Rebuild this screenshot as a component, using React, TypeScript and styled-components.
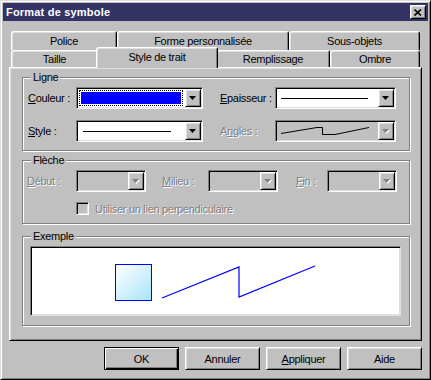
import React from 'react';
import styled, { createGlobalStyle, css } from 'styled-components';

const FACE = '#c0c0c0';
const SHADOW = '#808080';
const LIGHT = '#dfdfdf';

const GlobalStyle = createGlobalStyle`
  html, body {
    margin: 0;
    padding: 0;
    background: ${FACE};
  }
  body {
    font-family: 'Liberation Sans', Arial, sans-serif;
    font-size: 11px;
    letter-spacing: -0.3px;
    color: #000;
  }
`;

const raised = css`
  border: 1px solid;
  border-color: #fff #000 #000 #fff;
  box-shadow: inset 1px 1px ${LIGHT}, inset -1px -1px ${SHADOW};
  background: ${FACE};
`;

const sunken = css`
  border: 1px solid;
  border-color: ${SHADOW} #fff #fff ${SHADOW};
  box-shadow: inset 1px 1px #000, inset -1px -1px ${LIGHT};
  padding: 1px;
`;

const Window = styled.div`
  box-sizing: border-box;
  width: 431px;
  height: 380px;
  border: 1px solid;
  border-color: ${LIGHT} #000 #000 ${LIGHT};
  box-shadow: inset 1px 1px #fff, inset -1px -1px ${SHADOW};
  padding: 2px;
  background: ${FACE};
  display: flex;
  flex-direction: column;
`;

const TitleBar = styled.div`
  height: 18px;
  flex: none;
  background: #333366;
  display: flex;
  align-items: center;
  justify-content: space-between;
  padding: 0 2px 0 3px;
`;

const Title = styled.span`
  color: #fff;
  font-weight: bold;
  letter-spacing: 0.2px;
`;

const CloseButton = styled.button`
  ${raised};
  box-sizing: border-box;
  width: 16px;
  height: 14px;
  padding: 0;
  display: flex;
  align-items: center;
  justify-content: center;
`;

const Body = styled.div`
  padding: 10px 6px 0;
  display: flex;
  flex-direction: column;
`;

const TabStrip = styled.div`
  padding: 0 2px;
  display: flex;
  flex-direction: column;
`;

const TabRow = styled.div<{ $h: number }>`
  height: ${p => p.$h}px;
  display: flex;
`;

const Tab = styled.div<{ $w: number; $active?: boolean }>`
  box-sizing: border-box;
  flex: none;
  width: ${p => p.$w}px;
  display: flex;
  align-items: center;
  justify-content: center;
  border: 1px solid;
  border-bottom: none;
  border-color: #fff #000 transparent #fff;
  border-radius: 3px 3px 0 0;
  box-shadow: inset 1px 1px ${LIGHT}, inset -1px 0 ${SHADOW};
  background: ${FACE};
  white-space: nowrap;

  ${p =>
    p.$active &&
    css`
      position: relative;
      z-index: 1;
      align-self: flex-start;
      width: ${p.$w + 4}px;
      height: 21px;
      margin: -3px -2px 0;
      padding-bottom: 3px;
    `}
`;

const Panel = styled.div`
  box-sizing: border-box;
  height: 274px;
  border: 1px solid;
  border-color: #fff #000 #000 #fff;
  box-shadow: inset 1px 1px ${LIGHT}, inset -1px -1px ${SHADOW};
  padding: 3px 11px 0 12px;
  display: flex;
  flex-direction: column;
`;

const Group = styled.fieldset<{ $mt?: number }>`
  margin: ${p => p.$mt || 0}px 0 0;
  min-width: 0;
  padding: 0;
  border: 1px solid ${SHADOW};
  box-shadow: inset 1px 1px #fff, 1px 1px #fff;
`;

const Legend = styled.legend`
  padding: 0 2px;
  margin-left: 8px;
  line-height: 13px;
  background: ${FACE};
`;

const LineGrid = styled.div`
  display: grid;
  grid-template-columns: 48px 127px 17px 55px 121px;
  grid-template-rows: 22px 22px;
  row-gap: 11px;
  align-items: center;
  padding: 3px 0 8px 5px;
`;

const FieldRow = styled.div`
  display: flex;
  align-items: center;
  padding: 3px 0 0 4px;
`;

const Label = styled.span<{ $w?: number; $ml?: number; $disabled?: boolean; $col?: number }>`
  ${p => p.$w && `width: ${p.$w}px; flex: none;`}
  ${p => p.$ml && `margin-left: ${p.$ml}px;`}
  ${p => p.$col && `grid-column: ${p.$col};`}
  white-space: nowrap;
  ${p =>
    p.$disabled &&
    css`
      color: ${SHADOW};
      text-shadow: 1px 1px #fff;
    `}
`;

const Combo = styled.div<{ $w?: number; $disabled?: boolean; $col?: number }>`
  ${sunken};
  box-sizing: border-box;
  ${p => p.$w && `width: ${p.$w}px; flex: none;`}
  ${p => p.$col && `grid-column: ${p.$col};`}
  height: 22px;
  display: flex;
  background: ${p => (p.$disabled ? FACE : '#fff')};
`;

const ComboValue = styled.div`
  flex: 1;
  min-width: 0;
  display: flex;
  align-items: center;
  padding: 1px 2px 1px 1px;
`;

const FocusRect = styled.div`
  flex: 1;
  align-self: stretch;
  border: 1px dotted #000;
  padding: 1px;
  display: flex;
`;

const ColorFill = styled.div<{ $color: string }>`
  flex: 1;
  background: ${p => p.$color};
`;

const LineSample = styled.div<{ $w: number; $ml: number }>`
  width: ${p => p.$w}px;
  margin-left: ${p => p.$ml}px;
  height: 1px;
  background: #000;
`;

const DropButton = styled.div`
  ${raised};
  box-sizing: border-box;
  width: 16px;
  flex: none;
  display: flex;
  align-items: center;
  justify-content: center;
`;

const CheckRow = styled.label`
  display: flex;
  align-items: center;
  gap: 6px;
  padding: 10px 0 8px 53px;
`;

const CheckBox = styled.span`
  ${sunken};
  box-sizing: border-box;
  width: 13px;
  height: 13px;
  background: ${FACE};
`;

const PreviewWrap = styled.div`
  padding: 3px 8px 9px 7px;
`;

const Preview = styled.div`
  ${sunken};
  box-sizing: border-box;
  height: 70px;
  background: #fff;
  border-color: ${SHADOW} ${LIGHT} ${LIGHT} ${SHADOW};
`;

const ButtonBar = styled.div`
  display: flex;
  justify-content: flex-end;
  gap: 6px;
  margin-top: 6px;
`;

const Button = styled.button<{ $default?: boolean }>`
  ${raised};
  box-sizing: border-box;
  width: 75px;
  height: 23px;
  padding: 0;
  font: inherit;
  letter-spacing: inherit;
  color: #000;
  ${p =>
    p.$default &&
    css`
      border-color: #000;
      box-shadow: inset 1px 1px #fff, inset -1px -1px #000, inset -2px -2px ${SHADOW};
    `}
`;

const Arrow = ({ disabled }: { disabled?: boolean }) => (
  <svg width="8" height="5" viewBox="0 0 8 5">
    {disabled && <polygon points="1,1 8,1 4.5,5" fill="#fff" />}
    <polygon points="0,0 7,0 3.5,4" fill={disabled ? SHADOW : '#000'} />
  </svg>
);

const ComboBox = ({
  w,
  col,
  disabled,
  children,
}: {
  w?: number;
  col?: number;
  disabled?: boolean;
  children?: React.ReactNode;
}) => (
  <Combo $w={w} $col={col} $disabled={disabled}>
    <ComboValue>{children}</ComboValue>
    <DropButton>
      <Arrow disabled={disabled} />
    </DropButton>
  </Combo>
);

export default function App() {
  return (
    <>
      <GlobalStyle />
      <Window>
        <TitleBar>
          <Title>Format de symbole</Title>
          <CloseButton aria-label="Fermer">
            <svg width="8" height="7" viewBox="0 0 8 7">
              <path d="M0.5 0.5 L7 6.5 M7 0.5 L0.5 6.5" stroke="#000" strokeWidth="1.6" />
            </svg>
          </CloseButton>
        </TitleBar>

        <Body>
          <TabStrip>
            <TabRow $h={19}>
              <Tab $w={106}>Police</Tab>
              <Tab $w={172}>Forme personnalisée</Tab>
              <Tab $w={131}>Sous-objets</Tab>
            </TabRow>
            <TabRow $h={17}>
              <Tab $w={87}>Taille</Tab>
              <Tab $w={118} $active>
                Style de trait
              </Tab>
              <Tab $w={114}>Remplissage</Tab>
              <Tab $w={90}>Ombre</Tab>
            </TabRow>
          </TabStrip>

          <Panel>
            <Group>
              <Legend>Ligne</Legend>
              <LineGrid>
                <Label>
                  <u>C</u>ouleur :
                </Label>
                <ComboBox>
                  <FocusRect>
                    <ColorFill $color="#0000ff" />
                  </FocusRect>
                </ComboBox>
                <Label $col={4}>
                  <u>E</u>paisseur :
                </Label>
                <ComboBox>
                  <LineSample $w={87} $ml={3} />
                </ComboBox>
                <Label>
                  <u>S</u>tyle :
                </Label>
                <ComboBox>
                  <LineSample $w={88} $ml={4} />
                </ComboBox>
                <Label $col={4} $disabled>
                  A<u>n</u>gles :
                </Label>
                <ComboBox disabled>
                  <svg width="90" height="12" viewBox="0 0 90 12" style={{ marginLeft: 3 }}>
                    <polyline
                      points="0,8.5 36,2.5 41.5,2.5 41.5,9.5 54,9.5 88,2.5"
                      fill="none"
                      stroke="#000"
                      strokeWidth="1"
                    />
                  </svg>
                </ComboBox>
              </LineGrid>
            </Group>

            <Group $mt={3}>
              <Legend>Flèche</Legend>
              <FieldRow>
                <Label $w={49} $disabled>
                  <u>D</u>ébut :
                </Label>
                <ComboBox w={70} disabled />
                <Label $w={46} $ml={16} $disabled>
                  <u>M</u>ilieu :
                </Label>
                <ComboBox w={70} disabled />
                <Label $w={31} $ml={18} $disabled>
                  <u>F</u>in :
                </Label>
                <ComboBox w={70} disabled />
              </FieldRow>
              <CheckRow>
                <CheckBox />
                <Label $disabled>Utiliser un lien perpendiculaire</Label>
              </CheckRow>
            </Group>

            <Group $mt={6}>
              <Legend>Exemple</Legend>
              <PreviewWrap>
                <Preview>
                  <svg width="365" height="64" viewBox="0 0 365 64">
                    <defs>
                      <linearGradient id="fill" x1="0" y1="0" x2="1" y2="1">
                        <stop offset="0" stopColor="#ffffff" />
                        <stop offset="1" stopColor="#a8e4fa" />
                      </linearGradient>
                    </defs>
                    <rect x="83.5" y="16.5" width="36" height="36" fill="url(#fill)" stroke="#0000ff" />
                    <polyline
                      points="130,50 207,19 207,49 283,18"
                      fill="none"
                      stroke="#0000ff"
                      strokeWidth="1.2"
                    />
                  </svg>
                </Preview>
              </PreviewWrap>
            </Group>
          </Panel>

          <ButtonBar>
            <Button $default>OK</Button>
            <Button>Annuler</Button>
            <Button>
              <u>A</u>ppliquer
            </Button>
            <Button>Aide</Button>
          </ButtonBar>
        </Body>
      </Window>
    </>
  );
}
